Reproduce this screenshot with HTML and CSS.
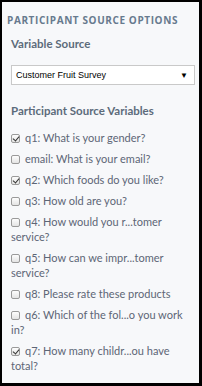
FILE: index.html
```html
<!DOCTYPE html>
<html lang="en">
<head>
    <meta charset="UTF-8">
    <title>Participant Source Options</title>
    <link rel="stylesheet" href="styles.css">
</head>
<body>
    <div class="panel">
        <h2 class="panel-title">Participant Source Options</h2>

        <div class="section">
            <h3 class="section-label">Variable Source</h3>
            <div class="select-box">
                <span>Customer Fruit Survey</span>
                <span class="select-arrow">&#9660;</span>
            </div>
        </div>

        <div class="section">
            <h3 class="section-label">Participant Source Variables</h3>
            <ul class="var-list">
                <li><span class="check checked"></span>q1: What is your gender?</li>
                <li><span class="check"></span>email: What is your email?</li>
                <li><span class="check checked"></span>q2: Which foods do you like?</li>
                <li><span class="check"></span>q3: How old are you?</li>
                <li><span class="check"></span>q4: How would you r...tomer service?</li>
                <li><span class="check"></span>q5: How can we impr...tomer service?</li>
                <li><span class="check"></span>q8: Please rate these products</li>
                <li><span class="check"></span>q6: Which of the fol...o you work in?</li>
                <li><span class="check checked"></span>q7: How many childr...ou have total?</li>
            </ul>
        </div>
    </div>
</body>
</html>
```

FILE: styles.css
```css
html, body {
    margin: 0;
    padding: 0;
    background: #000;
}

body {
    font-family: Lato, 'Open Sans', sans-serif;
    width: 202px;
    height: 386px;
    overflow: hidden;
}

.panel {
    margin: 2px 3px 0 2px;
    height: 381px;
    background: #f7f8fa;
    padding: 12px 4px 0 5px;
    box-sizing: border-box;
}

.panel-title {
    margin: 0;
    font-family: 'Open Sans', sans-serif;
    font-size: 10px;
    font-weight: 700;
    letter-spacing: 0.6px;
    text-transform: uppercase;
    color: #677a8e;
    line-height: 13px;
    white-space: nowrap;
}

.section {
    padding-left: 4px;
}

.section-label {
    margin: 9px 0 0 0;
    font-size: 11.5px;
    font-weight: 700;
    color: #5c6b7b;
    line-height: 16px;
}

.select-box {
    display: flex;
    justify-content: space-between;
    align-items: center;
    box-sizing: border-box;
    margin-top: 13px;
    height: 20px;
    padding: 0 6px 0 4px;
    background: #fff;
    border: 1px solid #c9c9c9;
    font-family: 'Liberation Sans', Arial, sans-serif;
    font-size: 9px;
    color: #000;
}

.select-arrow {
    font-size: 8px;
}

.section + .section .section-label {
    margin-top: 18px;
}

.var-list {
    list-style: none;
    margin: 11px 0 0 0;
    padding: 0;
}

.var-list li {
    font-size: 11px;
    line-height: 15px;
    color: #5d6676;
    margin-bottom: 6px;
}

.check {
    display: inline-block;
    width: 9px;
    height: 9px;
    margin-right: 5px;
    vertical-align: -1px;
    border: 1px solid #9a9a9a;
    border-radius: 2px;
    background: linear-gradient(#fdfdfd, #e4e4e4);
    box-sizing: border-box;
    position: relative;
}

.check.checked::after {
    content: "";
    position: absolute;
    left: 2px;
    top: 0px;
    width: 3px;
    height: 5px;
    border: solid #333;
    border-width: 0 1.5px 1.5px 0;
    transform: rotate(40deg);
}
```
